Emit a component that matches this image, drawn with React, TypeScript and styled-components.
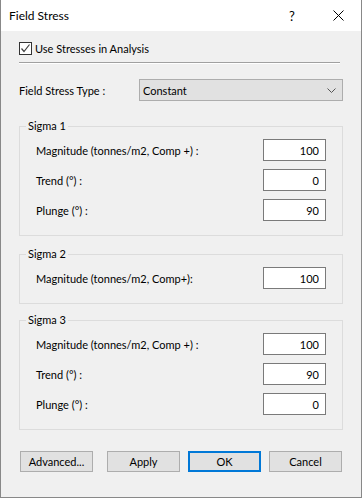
import React from 'react';
import styled, { createGlobalStyle } from 'styled-components';

const Global = createGlobalStyle`
  html, body { margin: 0; padding: 0; background: #f0f0f0; }
  body {
    font-family: "Segoe UI", Lato, "Liberation Sans", sans-serif;
    font-size: 11px;
    color: #000;
  }
  * { box-sizing: border-box; }
`;

const Window = styled.div`
  width: 362px;
  height: 498px;
  display: flex;
  flex-direction: column;
  background: #f0f0f0;
  border: 1px solid #888888;
  border-top: none;
`;

const TitleBar = styled.div`
  height: 31px;
  flex-shrink: 0;
  background: #ffffff;
  display: flex;
  align-items: center;
`;

const Title = styled.div`
  flex: 1;
  padding-left: 8px;
  font-size: 12px;
`;

const TitleButton = styled.div`
  width: 46px;
  height: 31px;
  display: flex;
  align-items: center;
  justify-content: center;
  font-size: 13px;
`;

const Body = styled.div`
  display: flex;
  flex-direction: column;
  padding: 11px 18px 0 18px;
`;

const CheckRow = styled.label`
  display: flex;
  align-items: center;
  height: 13px;
  gap: 3px;
`;

const CheckBox = styled.span`
  width: 13px;
  height: 13px;
  border: 1px solid #333333;
  background: #ffffff;
  display: flex;
  align-items: center;
  justify-content: center;
`;

const Separator = styled.div`
  margin-top: 7px;
  margin-right: 3px;
  height: 2px;
  border-top: 1px solid #a0a0a0;
  border-bottom: 1px solid #ffffff;
`;

const TypeRow = styled.div`
  margin-top: 15px;
  display: flex;
  align-items: center;
  height: 22px;
`;

const TypeLabel = styled.span`
  width: 120px;
`;

const Combo = styled.div`
  flex: 1;
  height: 22px;
  background: #e1e1e1;
  border: 1px solid #adadad;
  display: flex;
  align-items: center;
  justify-content: space-between;
  padding: 0 6px 0 3px;
`;

const Group = styled.fieldset<{ $gap: number }>`
  margin: ${(p) => p.$gap}px 0 0 0;
  border: 1px solid #dcdcdc;
  padding: 6px 16px 14px 16px;
  min-width: 0;
  display: flex;
  flex-direction: column;
  gap: 8px;
`;

const Legend = styled.legend`
  margin-left: -10px;
  padding: 0 2px;
  line-height: 14px;
  font-size: 11px;
`;

const FieldRow = styled.div`
  display: flex;
  align-items: center;
  justify-content: space-between;
  height: 22px;
`;

const NumberBox = styled.input`
  width: 63px;
  height: 22px;
  border: 1px solid #7a7a7a;
  background: #ffffff;
  text-align: right;
  padding: 0 6px 0 2px;
  font-family: inherit;
  font-size: 11px;
  color: #000;
  outline: none;
  margin: 0;
`;

const ButtonRow = styled.div`
  margin-top: 21px;
  padding-left: 1px;
  display: flex;
  gap: 8px;
`;

const Button = styled.button<{ $default?: boolean; $spaced?: boolean }>`
  width: 73px;
  height: 21px;
  margin: 0 ${(p) => (p.$spaced ? 6 : 0)}px 0 0;
  padding: 0;
  background: #e1e1e1;
  border: ${(p) => (p.$default ? '2px solid #0078d7' : '1px solid #adadad')};
  font-family: inherit;
  font-size: 11px;
  color: #000;
`;

type Field = { label: string; value: string };

const groups: { title: string; fields: Field[]; gap: number }[] = [
  {
    title: 'Sigma 1',
    gap: 18,
    fields: [
      { label: 'Magnitude (tonnes/m2, Comp +) :', value: '100' },
      { label: 'Trend (°) :', value: '0' },
      { label: 'Plunge (°) :', value: '90' },
    ],
  },
  {
    title: 'Sigma 2',
    gap: 11,
    fields: [{ label: 'Magnitude (tonnes/m2, Comp+):', value: '100' }],
  },
  {
    title: 'Sigma 3',
    gap: 9,
    fields: [
      { label: 'Magnitude (tonnes/m2, Comp +) :', value: '100' },
      { label: 'Trend (°) :', value: '90' },
      { label: 'Plunge (°) :', value: '0' },
    ],
  },
];

export default function App() {
  return (
    <>
      <Global />
      <Window>
        <TitleBar>
          <Title>Field Stress</Title>
          <TitleButton>?</TitleButton>
          <TitleButton>
            <svg width="11" height="11" viewBox="0 0 11 11">
              <path d="M0.5 0.5 L10.5 10.5 M10.5 0.5 L0.5 10.5" stroke="#000" strokeWidth="1" fill="none" />
            </svg>
          </TitleButton>
        </TitleBar>
        <Body>
          <CheckRow>
            <CheckBox>
              <svg width="11" height="11" viewBox="0 0 11 11">
                <path d="M1.5 5.5 L4 8.5 L9.5 1.5" stroke="#404040" strokeWidth="1.2" fill="none" />
              </svg>
            </CheckBox>
            <span>Use Stresses in Analysis</span>
          </CheckRow>
          <Separator />
          <TypeRow>
            <TypeLabel>Field Stress Type :</TypeLabel>
            <Combo>
              <span>Constant</span>
              <svg width="9" height="5" viewBox="0 0 9 5">
                <path d="M0.5 0.5 L4.5 4.5 L8.5 0.5" stroke="#555" strokeWidth="1" fill="none" />
              </svg>
            </Combo>
          </TypeRow>
          {groups.map((g) => (
            <Group key={g.title} $gap={g.gap}>
              <Legend>{g.title}</Legend>
              {g.fields.map((f, i) => (
                <FieldRow key={i}>
                  <span>{f.label}</span>
                  <NumberBox defaultValue={f.value} readOnly />
                </FieldRow>
              ))}
            </Group>
          ))}
          <ButtonRow>
            <Button $spaced>Advanced...</Button>
            <Button>Apply</Button>
            <Button $default>OK</Button>
            <Button>Cancel</Button>
          </ButtonRow>
        </Body>
      </Window>
    </>
  );
}
